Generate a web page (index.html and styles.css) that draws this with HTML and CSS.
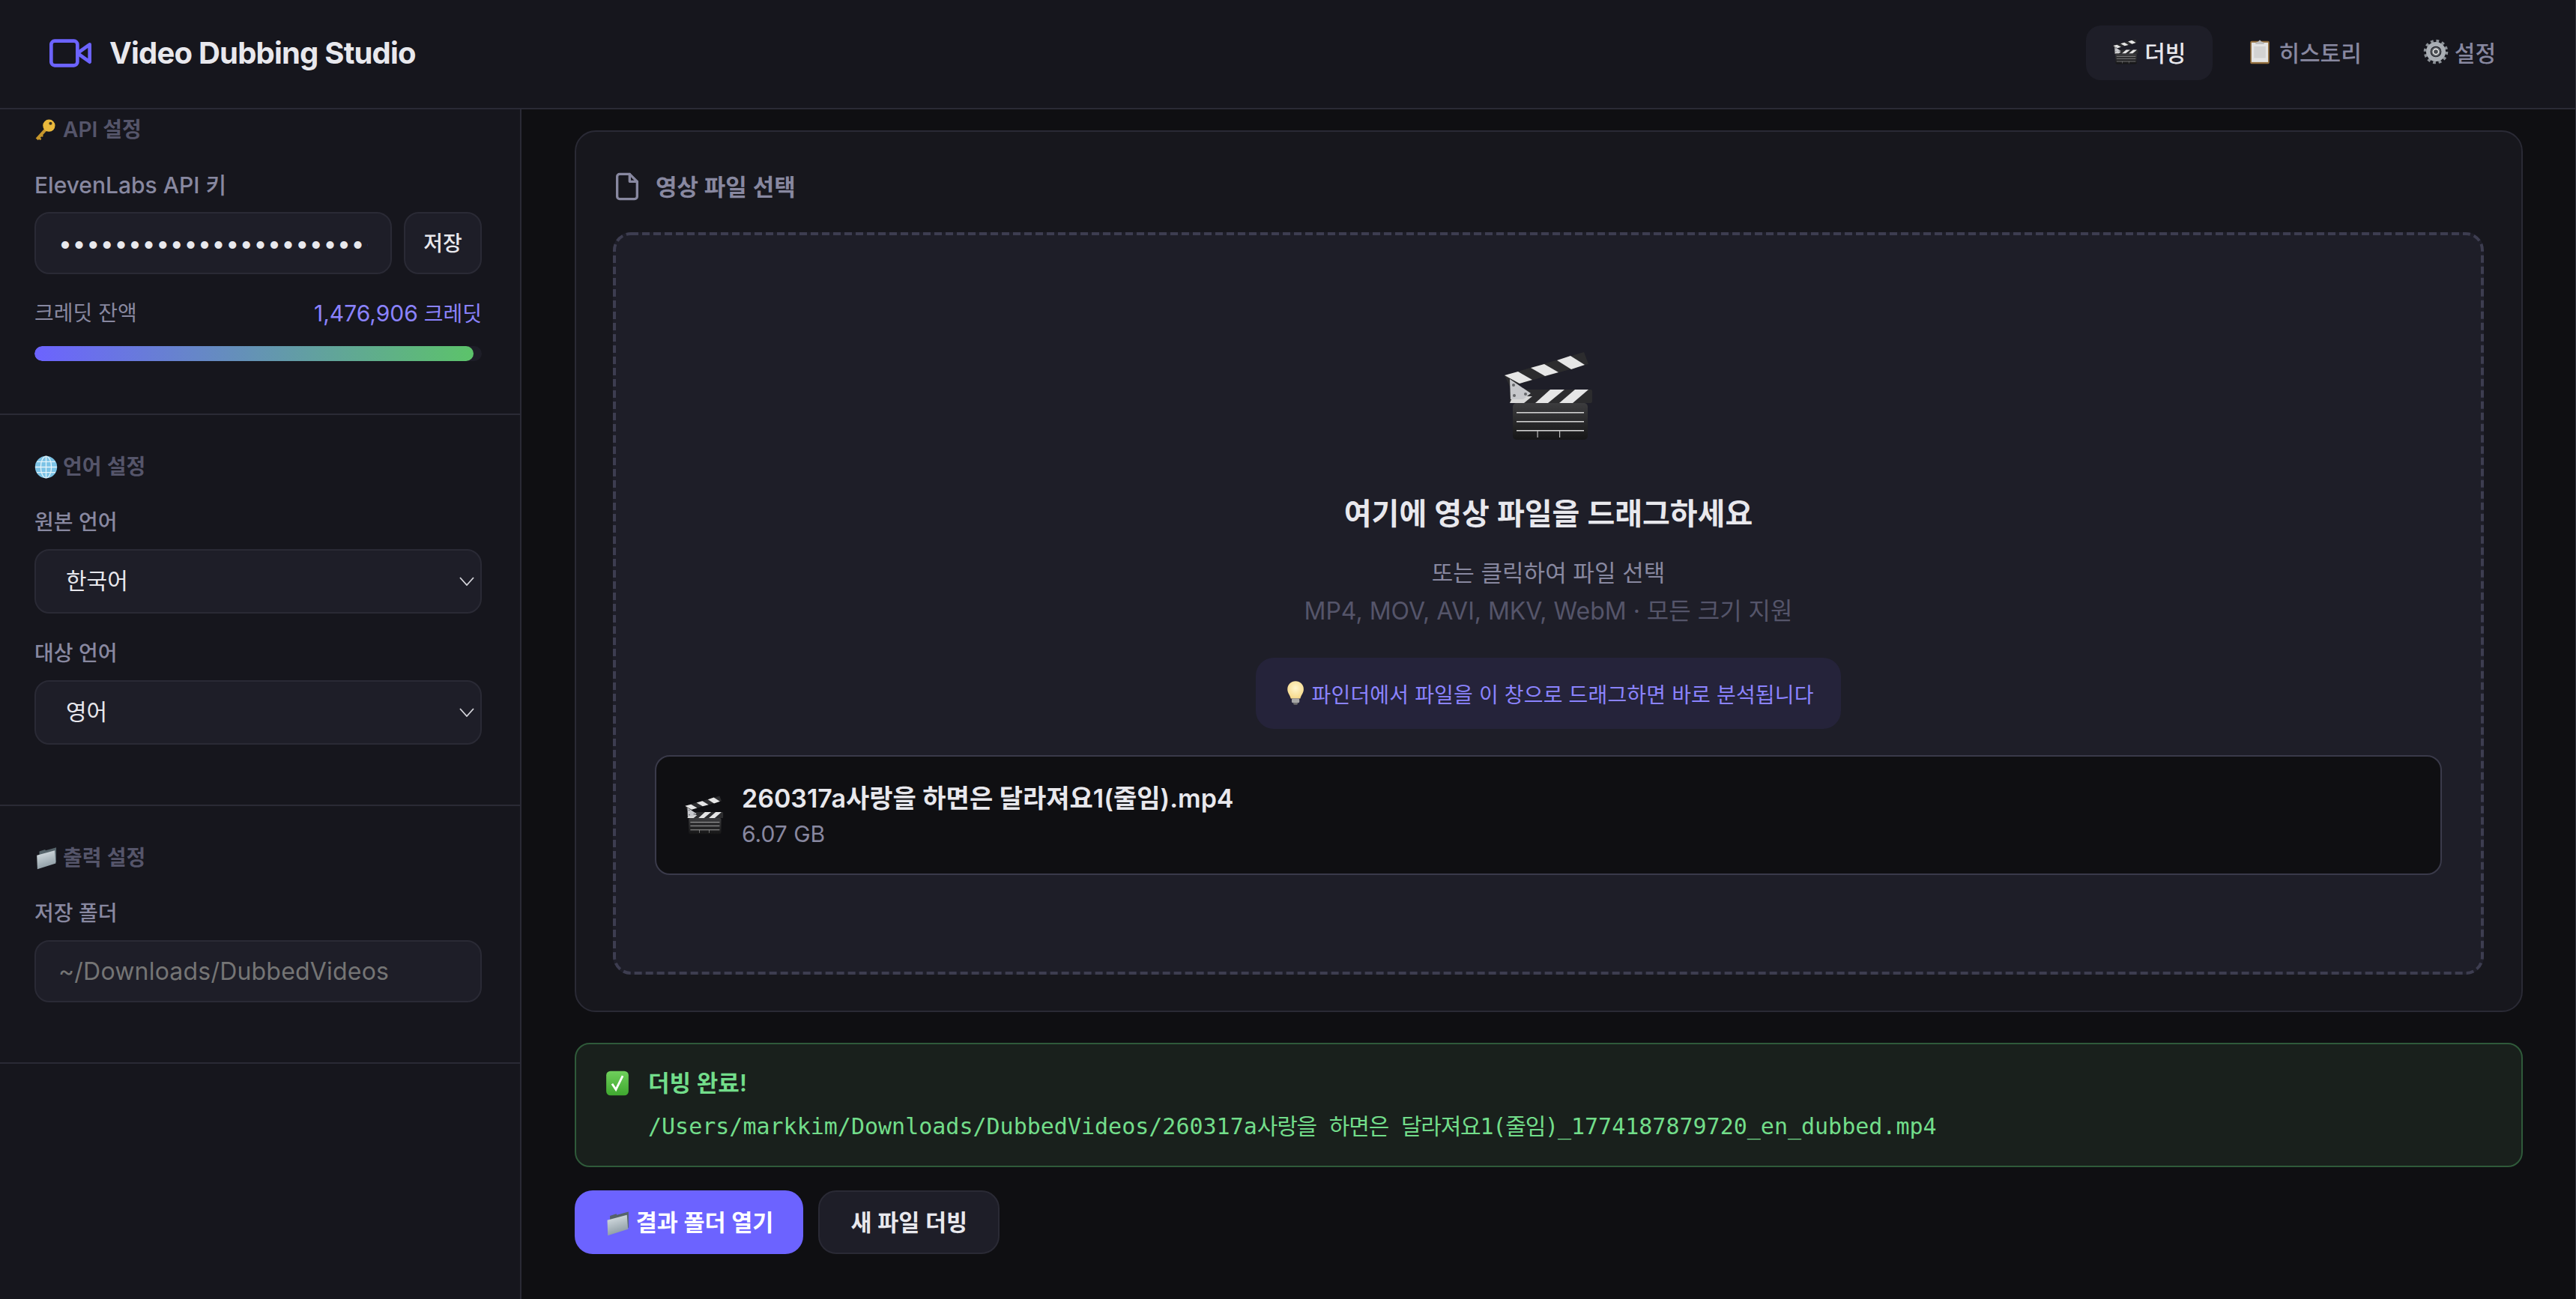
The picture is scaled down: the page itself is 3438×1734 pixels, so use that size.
FILE: index.html

```html
<!DOCTYPE html>
<html lang="ko">
<head>
  <meta charset="UTF-8">
  <meta name="viewport" content="width=device-width, initial-scale=1.0">
  <title>Video Dubbing Studio</title>
  <link rel="stylesheet" href="styles.css">
</head>
<body>
  <!-- emoji drawn as symbols, reused below -->
  <svg class="defs" aria-hidden="true">
    <defs>
      <linearGradient id="clapBody" x1="0" y1="0" x2="0" y2="1">
        <stop offset="0" stop-color="#3c3c3e"/>
        <stop offset="1" stop-color="#161617"/>
      </linearGradient>
      <linearGradient id="folderFront" x1="0" y1="0" x2="0.3" y2="1">
        <stop offset="0" stop-color="#dfe6ea"/>
        <stop offset="1" stop-color="#8c9ba3"/>
      </linearGradient>
      <linearGradient id="checkFill" x1="0" y1="0" x2="0" y2="1">
        <stop offset="0" stop-color="#6fd05c"/>
        <stop offset="1" stop-color="#3fa82f"/>
      </linearGradient>
      <radialGradient id="bulbFill" cx="0.5" cy="0.4" r="0.6">
        <stop offset="0" stop-color="#fff6cf"/>
        <stop offset="1" stop-color="#f6d98a"/>
      </radialGradient>
      <symbol id="e-clapper" viewBox="0 0 120 120">
        <polygon points="1,32 107,1 113,17 8,47" fill="#2c2c2e"/>
        <polygon points="1,32 19,27 38,38 21,43" fill="#e6e6e6"/>
        <polygon points="36,22 54,17 73,28 55,33" fill="#e6e6e6"/>
        <polygon points="71,12 89,6 108,18 90,24" fill="#e6e6e6"/>
        <rect x="8" y="51" width="110" height="18" rx="2" fill="#2c2c2e"/>
        <polygon points="42,69 59,69 81,51 62,51" fill="#e6e6e6"/>
        <polygon points="74,69 92,69 113,51 95,51" fill="#e6e6e6"/>
        <polygon points="8,69 27,69 38,60 12,60" fill="#d8d8d8"/>
        <rect x="12" y="69" width="100" height="49" rx="5" fill="url(#clapBody)"/>
        <rect x="17" y="81" width="90" height="1.6" fill="#cfcfcf"/>
        <rect x="17" y="93" width="90" height="1.6" fill="#cfcfcf"/>
        <rect x="17" y="105" width="90" height="1.6" fill="#cfcfcf"/>
        <rect x="44.5" y="106" width="1.2" height="9" fill="#bdbdbd"/>
        <rect x="74" y="106" width="1.2" height="9" fill="#bdbdbd"/>
        <polygon points="8,37 36,56 26,64 9,64" fill="#c6c7cb"/>
        <circle cx="13" cy="45" r="2" fill="#66676b"/>
        <circle cx="14" cy="59" r="2" fill="#66676b"/>
        <circle cx="29" cy="57" r="2" fill="#66676b"/>
      </symbol>
      <symbol id="e-clipboard" viewBox="0 0 24 24">
        <rect x="3" y="2" width="18" height="21.5" rx="1.2" fill="#94703f"/>
        <rect x="4.2" y="3.4" width="15.6" height="18.4" fill="#e4e4e4"/>
        <rect x="6.5" y="7" width="11" height="11" fill="#d2d2d2"/>
        <polygon points="8,3.6 10.5,2.4 12,0.8 13.5,2.4 16,3.6 16,5 8,5" fill="#bdbdbd"/>
      </symbol>
      <symbol id="e-gear" viewBox="0 0 24 24">
        <circle cx="12" cy="12" r="10.2" fill="none" stroke="#8b9096" stroke-width="2.6" stroke-dasharray="2.67 2.67"/>
        <circle cx="12" cy="12" r="7.2" fill="none" stroke="#a9aeb4" stroke-width="4"/>
        <circle cx="12" cy="12" r="3.8" fill="#ececec" stroke="#5b6066" stroke-width="1.4"/>
        <circle cx="12" cy="12" r="2" fill="#4a4e53"/>
      </symbol>
      <symbol id="e-key" viewBox="2 0 22 24">
        <path d="M13.5 10.5 3.5 21.5" stroke="#c6962c" stroke-width="3.2" fill="none"/>
        <path d="M5 19.5l2.6 2.4M7.6 16.8l2 1.9" stroke="#c6962c" stroke-width="2" fill="none"/>
        <circle cx="16" cy="7.5" r="6.3" fill="#eab93c"/>
        <circle cx="17.6" cy="5.2" r="1.6" fill="#3b3320"/>
      </symbol>
      <symbol id="e-globe" viewBox="0 0 24 24">
        <circle cx="12" cy="12" r="11.4" fill="#7cc3e6"/>
        <g fill="none" stroke="#e4f3fa" stroke-width="1">
          <ellipse cx="12" cy="12" rx="5.5" ry="11.2"/>
          <path d="M12 .8v22.4M.8 12h22.4M2.4 6.5h19.2M2.4 17.5h19.2"/>
        </g>
      </symbol>
      <symbol id="e-folder" viewBox="0 0 24 24">
        <polygon points="5,5 11,3 11.5,4 22.5,1 22.5,16 5,20" fill="#55636a"/>
        <polygon points="2.5,9 21,4 22,17.5 3,23.5" fill="url(#folderFront)"/>
      </symbol>
      <symbol id="e-bulb" viewBox="0 0 24 24">
        <path d="M12 .8a7.6 7.6 0 0 0-7.6 7.6c0 3.4 2.2 5.2 3.2 8.8h8.8c1-3.6 3.2-5.4 3.2-8.8A7.6 7.6 0 0 0 12 .8z" fill="url(#bulbFill)"/>
        <rect x="8.4" y="17.2" width="7.2" height="4" rx="1" fill="#a7a7a7"/>
        <rect x="10" y="21" width="4" height="2" rx="1" fill="#6f6f6f"/>
      </symbol>
      <symbol id="e-check" viewBox="0 0 24 24">
        <rect x="1.5" y="0.5" width="21" height="23" rx="4" fill="url(#checkFill)"/>
        <path d="M7 12.5l3.6 5.5 6.4-13" fill="none" stroke="#fff" stroke-width="2"/>
      </symbol>
      <symbol id="chev" viewBox="0 0 20 12">
        <path d="M1 1l9 10 9-10" fill="none" stroke="#d4d4da" stroke-width="1.8"/>
      </symbol>
    </defs>
  </svg>

  <header class="topbar">
    <div class="brand">
      <svg class="brand-icon" viewBox="0 0 24 24" fill="none" stroke="#6c63ff" stroke-width="2" stroke-linejoin="round" stroke-linecap="round">
        <polygon points="23 7 16 12 23 17 23 7"/>
        <rect x="1" y="5" width="15" height="14" rx="2"/>
      </svg>
      <span class="brand-name">Video Dubbing Studio</span>
    </div>
    <nav class="tabs">
      <a class="tab active"><svg class="emoji"><use href="#e-clapper"/></svg> 더빙</a>
      <a class="tab"><svg class="emoji"><use href="#e-clipboard"/></svg> 히스토리</a>
      <a class="tab"><svg class="emoji"><use href="#e-gear"/></svg> 설정</a>
    </nav>
  </header>

  <div class="layout">
    <aside class="sidebar">
      <section class="side-section first">
        <h3 class="side-title"><svg class="emoji"><use href="#e-key"/></svg> API 설정</h3>
        <label class="field-label wide">ElevenLabs API 키</label>
        <div class="key-row">
          <input class="text-input key-input" type="password" value="xxxxxxxxxxxxxxxxxxxxxxxxxxxxxxxxxxxxxxxxxxxxxxxxxxx">
          <button class="save-btn">저장</button>
        </div>
        <div class="credit-row">
          <span>크레딧 잔액</span>
          <span class="credit-value"><span class="num">1,476,906</span> 크레딧</span>
        </div>
        <div class="credit-track"><div class="credit-fill" style="width: 98.2%"></div></div>
      </section>

      <section class="side-section">
        <h3 class="side-title"><svg class="emoji"><use href="#e-globe"/></svg> 언어 설정</h3>
        <label class="field-label">원본 언어</label>
        <div class="select-wrap">
          <select class="lang-select"><option>한국어</option></select>
          <svg class="chevron"><use href="#chev"/></svg>
        </div>
        <label class="field-label next">대상 언어</label>
        <div class="select-wrap">
          <select class="lang-select"><option>영어</option></select>
          <svg class="chevron"><use href="#chev"/></svg>
        </div>
      </section>

      <section class="side-section">
        <h3 class="side-title"><svg class="emoji"><use href="#e-folder"/></svg> 출력 설정</h3>
        <label class="field-label">저장 폴더</label>
        <input class="text-input" type="text" placeholder="~/Downloads/DubbedVideos">
      </section>
    </aside>

    <main class="main">
      <div class="card">
        <div class="card-title">
          <svg class="file-icon" viewBox="0 0 24 24" fill="none" stroke="currentColor" stroke-width="2" stroke-linecap="round" stroke-linejoin="round">
            <path d="M14 2H6a2 2 0 0 0-2 2v16a2 2 0 0 0 2 2h12a2 2 0 0 0 2-2V8z"/>
            <polyline points="14 2 14 8 20 8"/>
          </svg>
          <span>영상 파일 선택</span>
        </div>
        <div class="dropzone">
          <svg class="dash-frame"><rect class="dash-rect" x="2" y="2" rx="22" ry="22"/></svg>
          <svg class="drop-icon"><use href="#e-clapper"/></svg>
          <div class="drop-heading">여기에 영상 파일을 드래그하세요</div>
          <div class="drop-sub">또는 클릭하여 파일 선택</div>
          <div class="drop-formats">MP4, MOV, AVI, MKV, WebM · 모든 크기 지원</div>
          <div class="drop-hint"><svg class="emoji"><use href="#e-bulb"/></svg> 파인더에서 파일을 이 창으로 드래그하면 바로 분석됩니다</div>
          <div class="file-box">
            <svg class="file-emoji"><use href="#e-clapper"/></svg>
            <div>
              <div class="file-name">260317a사랑을 하면은 달라져요1(줄임).mp4</div>
              <div class="file-size">6.07 GB</div>
            </div>
          </div>
        </div>
      </div>

      <div class="success">
        <svg class="success-emoji"><use href="#e-check"/></svg>
        <div>
          <div class="success-title">더빙 완료!</div>
          <div class="success-path">/Users/markkim/Downloads/DubbedVideos/260317a<span class="path-ko">사랑을 하면은 달라져요1(줄임)</span>_1774187879720_en_dubbed.mp4</div>
        </div>
      </div>

      <div class="actions">
        <button class="btn btn-primary"><svg class="emoji"><use href="#e-folder"/></svg> 결과 폴더 열기</button>
        <button class="btn btn-ghost">새 파일 더빙</button>
      </div>
    </main>
  </div>
</body>
</html>
```

FILE: styles.css

```css
* { box-sizing: border-box; }
html, body { height: 100%; }
body { margin: 0; background: #0f0f12; color: #e8e8ed; font-family: Inter, "Noto Sans CJK KR", sans-serif; overflow: hidden; border-right: 1px solid #33333d; }
.defs { position: absolute; width: 0; height: 0; }

.emoji { width: 1.22em; height: 1.22em; vertical-align: -0.24em; }

.topbar { height: 146px; display: flex; align-items: center; justify-content: space-between; padding: 0 70px 3px 66px; background: #16161d; border-bottom: 2px solid #2a2a35; }
.brand { display: flex; align-items: center; gap: 24px; }
.brand-icon { width: 56px; height: 56px; }
.brand-name { font-size: 40px; font-weight: 700; letter-spacing: -0.8px; }
.tabs { display: flex; gap: 10px; }
.tab { height: 73px; display: flex; align-items: center; gap: 8px; padding: 0 36px 3px; border-radius: 20px; font-size: 30px; font-weight: 500; color: #8888a0; }
.tab .emoji { width: 34px; height: 34px; }
.tab.active { background: #1e1e28; color: #e8e8ed; }

.layout { display: flex; height: calc(100% - 146px); }
.sidebar { width: 696px; flex: none; background: #16161d; border-right: 2px solid #2a2a35; overflow: hidden; }
.side-section { padding: 51px 51px 80px 46px; border-bottom: 2px solid #2a2a35; }
.side-section.first { padding-top: 9px; padding-bottom: 70px; }
.side-title { margin: 0 0 38px; font-size: 28px; line-height: 36px; font-weight: 600; color: #55556a; }
.side-title .emoji { width: 31px; height: 31px; vertical-align: -6px; }
.field-label { display: block; margin-bottom: 18px; font-size: 28px; line-height: 36px; font-weight: 500; color: #8888a0; }
.field-label.wide { font-size: 30px; }
.field-label.next { margin-top: 35px; }

.text-input { width: 100%; height: 83px; padding: 0 30px; background: #1e1e28; border: 2px solid #2a2a35; border-radius: 20px; color: #e8e8ed; font-family: inherit; font-size: 32px; letter-spacing: 0.2px; outline: none; display: block; }
.text-input::placeholder { color: #757575; }
.key-row { display: flex; gap: 16px; }
.key-input { flex: 1; min-width: 0; letter-spacing: 0.6px; }
.save-btn { width: 104px; flex: none; padding: 0 0 3px; background: #1e1e28; border: 2px solid #2a2a35; border-radius: 20px; color: #e8e8ed; font-family: inherit; font-size: 28px; font-weight: 500; }

.credit-row { display: flex; justify-content: space-between; margin-top: 34px; font-size: 28px; line-height: 36px; color: #8888a0; }
.credit-value { color: #8b83ff; }
.credit-value .num { font-size: 30px; }
.credit-track { height: 20px; margin-top: 25px; background: #1e1e28; border-radius: 10px; overflow: hidden; }
.credit-fill { height: 100%; border-radius: 10px; background: linear-gradient(90deg, #6c63ff, #5cc36a); }

.select-wrap { position: relative; }
.lang-select { width: 100%; height: 86px; padding: 0 60px 2px 40px; appearance: none; background: #1e1e28; border: 2px solid #2a2a35; border-radius: 20px; color: #e8e8ed; font-family: inherit; font-size: 30px; outline: none; display: block; }
.chevron { position: absolute; right: 10px; top: 37px; width: 20px; height: 12px; }

.main { flex: 1; min-width: 0; padding: 28px 70px 0 71px; overflow: hidden; }
.card { background: #17171d; border: 2px solid #2a2a35; border-radius: 28px; padding: 48px 50px 48px 49px; }
.card-title { display: flex; align-items: center; gap: 18px; height: 50px; margin-bottom: 36px; font-size: 31px; font-weight: 600; color: #8888a0; }
.card-title span { padding-bottom: 4px; }
.file-icon { width: 40px; height: 40px; margin-left: -1px; }

.dropzone { position: relative; display: flex; flex-direction: column; align-items: center; padding: 159px 56px 133px; background: #1e1e28; border-radius: 24px; }
/* dashes drawn in svg, the css dashed border has the wrong rhythm */
.dash-frame { position: absolute; left: 0; top: 0; width: 100%; height: 100%; pointer-events: none; }
.dash-rect { width: calc(100% - 4px); height: calc(100% - 4px); fill: none; stroke: #3d3d50; stroke-width: 4; stroke-dasharray: 10 5; }
.drop-icon { width: 120px; height: 120px; }
.drop-heading { margin-top: 69px; font-size: 40px; line-height: 56px; font-weight: 600; }
.drop-sub { margin-top: 29px; font-size: 31px; line-height: 44px; color: #8888a0; }
.drop-formats { margin-top: 7px; font-size: 32px; line-height: 44px; color: #55556a; }
.drop-hint { margin-top: 40px; height: 95px; display: flex; align-items: center; gap: 4px; padding: 0 36px; background: #25233a; border-radius: 24px; font-size: 28px; letter-spacing: 0.15px; color: #8b83ff; }
.file-box { align-self: stretch; height: 160px; margin-top: 35px; display: flex; align-items: center; gap: 24px; padding: 0 38px; background: #0f0f12; border: 2px solid #3a3a4a; border-radius: 20px; }
.file-emoji { width: 52px; height: 52px; flex: none; }
.file-name { font-size: 34px; line-height: 46px; font-weight: 600; }
.file-size { margin-top: 4px; font-size: 30px; line-height: 40px; color: #8888a0; }

.success { margin-top: 41px; display: flex; gap: 24px; padding: 34px 38px 32px 38px; background: #19201c; border: 2px solid #2f5a3a; border-radius: 20px; }
.success-emoji { width: 34px; height: 36px; flex: none; }
.success-title { font-size: 31px; line-height: 36px; font-weight: 600; color: #72dd8a; }
.success-path { margin-top: 20px; font-family: "DejaVu Sans Mono", "Noto Sans CJK KR", monospace; font-size: 30px; line-height: 40px; color: #72dd8a; }
.path-ko { letter-spacing: -1.2px; }

.actions { margin-top: 31px; display: flex; gap: 20px; }
.btn { height: 85px; padding: 0 41px 3px; border-radius: 24px; font-family: inherit; font-size: 30.5px; font-weight: 600; color: #fff; }
.btn .emoji { width: 34px; height: 34px; vertical-align: -7px; }
.btn-primary { background: #6c63ff; border: 0; padding: 0 40px 3px; }
.btn-ghost { background: #1e1e28; border: 2px solid #2a2a35; color: #e8e8ed; }
```
